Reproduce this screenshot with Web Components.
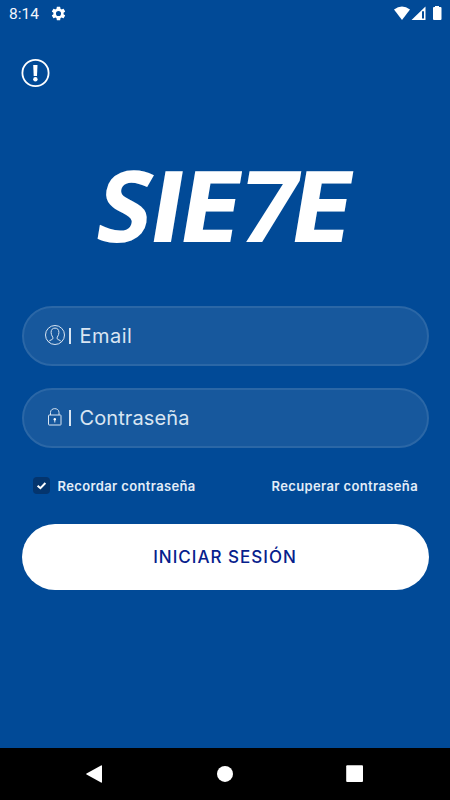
<!DOCTYPE html>
<html lang="es">
<head>
<meta charset="utf-8">
<title>SIE7E</title>
<style>
    html, body{
        margin: 0;
        height: 100%;
        background: #014a97;
    }
</style>
</head>
<body>
<login-screen></login-screen>
<script>
class StatusBar extends HTMLElement{
    constructor(){
        super();
        this.attachShadow({mode:'open'}).innerHTML = `
            <style>
                :host{
                    display: flex;
                    align-items: center;
                    height: 27px;
                    padding: 0 6px 0 9px;
                    font: 15.5px Roboto, sans-serif;
                    color: #f2f6fc;
                }
                .gear{ margin-left: 11px; }
                .right{ margin-left: auto; }
                svg{ display: block; }
            </style>
            <span>8:14</span>
            <svg class="gear" width="17" height="17" viewBox="0 0 24 24" fill="#fff"><path d="M19.14 12.94c.04-.3.06-.61.06-.94 0-.32-.02-.64-.07-.94l2.03-1.58a.49.49 0 0 0 .12-.61l-1.92-3.32a.49.49 0 0 0-.59-.22l-2.39.96c-.5-.38-1.03-.7-1.62-.94l-.36-2.54a.48.48 0 0 0-.48-.41h-3.84c-.24 0-.43.17-.47.41l-.36 2.54c-.59.24-1.13.57-1.62.94l-2.39-.96a.48.48 0 0 0-.59.22L2.74 8.87a.48.48 0 0 0 .12.61l2.03 1.58c-.05.3-.09.63-.09.94s.02.64.07.94l-2.03 1.58a.49.49 0 0 0-.12.61l1.92 3.32c.12.22.37.29.59.22l2.39-.96c.5.38 1.03.7 1.62.94l.36 2.54c.05.24.24.41.48.41h3.84c.24 0 .44-.17.47-.41l.36-2.54c.59-.24 1.13-.56 1.62-.94l2.39.96c.22.08.47 0 .59-.22l1.92-3.32a.48.48 0 0 0-.12-.61zM12 15.6A3.6 3.6 0 1 1 12 8.4a3.6 3.6 0 0 1 0 7.2z"/></svg>
            <svg class="right" width="50" height="16" viewBox="0 0 50 16" fill="#fff">
                <path d="M0 3.6Q8 -2.4 16 3.6L8 14Z"/>
                <path fill-rule="evenodd" d="M31.5 0.6V14H17.5ZM30 5.2H28V12.4H30Z"/>
                <path d="M41 1V0H45V1H46.5Q47.5 1 47.5 2V13Q47.5 14 46.5 14H40Q39 14 39 13V2Q39 1 40 1Z"/>
            </svg>
        `;
    }
}

class BrandLogo extends HTMLElement{
    constructor(){
        super();
        // letter, baseline x, horizontal scale
        const letters = [
            ['S', 92.5, 1],
            ['I', 143.6, 1.15],
            ['E', 173.2, 1.15],
            ['7', 235, 1.02],
            ['E', 284.6, 1.15]
        ];
        this.attachShadow({mode:'open'}).innerHTML = `
            <style>
                :host{ display: block; height: 90px; }
                svg{ display: block; overflow: visible; }
                text{
                    font: 700 99px "Open Sans", sans-serif;
                    fill: #fff;
                }
            </style>
            <svg width="450" height="90" viewBox="0 0 450 90">${letters.map(([c, x, s]) =>
                `<text transform="translate(${x} 80.7) skewX(-9.5) scale(${s} 1)">${c}</text>`).join('')}</svg>
        `;
    }
}

class LoginField extends HTMLElement{
    constructor(){
        super();
        this.attachShadow({mode:'open'}).innerHTML = `
            <style>
                :host{
                    display: flex;
                    align-items: center;
                    box-sizing: border-box;
                    height: 60px;
                    padding-left: 20px;
                    border: 2px solid #2b67a6;
                    border-radius: 30px;
                    background: #17589d;
                    color: #d9e5f2;
                    font: 20px Inter, sans-serif;
                }
                .bar{
                    width: 2px;
                    height: 16px;
                    margin: 0 9px 0 3px;
                    background: #d9e5f2;
                }
                .label{ letter-spacing: var(--label-spacing, .5px); }
            </style>
            <slot name="icon"></slot>
            <span class="bar"></span>
            <span class="label"><slot></slot></span>
        `;
    }
}

class CheckOption extends HTMLElement{
    constructor(){
        super();
        this.attachShadow({mode:'open'}).innerHTML = `
            <style>
                :host{ display: flex; align-items: center; }
                .box{
                    width: 17px;
                    height: 17px;
                    margin-right: 8px;
                    border-radius: 4px;
                    background: #04356e;
                }
                svg{ display: block; }
            </style>
            <span class="box"><svg width="17" height="17" fill="none" stroke="#fff" stroke-width="2"><path d="M4.6 8.7L7.4 11.2L12.4 6"/></svg></span>
            <slot></slot>
        `;
    }
}

class PillButton extends HTMLElement{
    constructor(){
        super();
        this.attachShadow({mode:'open'}).innerHTML = `
            <style>
                :host{
                    display: flex;
                    align-items: center;
                    justify-content: center;
                    height: 66px;
                    border-radius: 33px;
                    background: #fff;
                    color: #06208c;
                    font: 500 17px Inter, sans-serif;
                    letter-spacing: 1px;
                }
            </style>
            <slot></slot>
        `;
    }
}

class NavBar extends HTMLElement{
    constructor(){
        super();
        this.attachShadow({mode:'open'}).innerHTML = `
            <style>
                :host{
                    display: flex;
                    align-items: center;
                    justify-content: space-between;
                    box-sizing: border-box;
                    height: 52px;
                    padding: 0 86px 0 85px;
                    background: #000;
                }
                svg{ display: block; }
            </style>
            <svg width="18" height="18" fill="#fff"><path d="M1.5 8.4L16 .4Q17 0 17 1V17Q17 18 16 17.5L1.5 9.4Q.7 8.9 1.5 8.4Z"/></svg>
            <svg width="18" height="18" fill="#fff"><circle cx="9" cy="8.9" r="8"/></svg>
            <svg width="18" height="18" fill="#fff"><rect x=".2" y=".3" width="16.8" height="16.7" rx="1"/></svg>
        `;
    }
}

class LoginScreen extends HTMLElement{
    constructor(){
        super();
        this.attachShadow({mode:'open'}).innerHTML = `
            <style>
                :host{
                    display: flex;
                    flex-direction: column;
                    width: 450px;
                    height: 800px;
                    background: #014a97;
                    font-family: Inter, sans-serif;
                }
                svg{ display: block; }
                .alert{ margin: 31px 0 0 21px; }
                brand-logo{ margin-top: 74px; }
                form{
                    display: flex;
                    flex-direction: column;
                    gap: 22px;
                    margin: 54.5px 21.5px 0;
                }
                .options{
                    display: flex;
                    align-items: center;
                    justify-content: space-between;
                    height: 20px;
                    margin: 6px 10.5px 6px 11px;
                    color: #e3edf8;
                    font-size: 13px;
                    font-weight: 600;
                    letter-spacing: .37px;
                }
                nav-bar{ margin-top: auto; }
                .password{ --label-spacing: .1px; }
            </style>
            <status-bar></status-bar>
            <svg class="alert" width="29" height="29" fill="none" stroke="#fff">
                <circle cx="14.5" cy="15" r="13.1" stroke-width="1.8"/>
                <path fill="#fff" stroke="none" d="M12.2 7H16.5L16 18H12.7Z"/>
                <circle cx="14.4" cy="21.3" r="2.2" fill="#fff" stroke="none"/>
            </svg>
            <brand-logo></brand-logo>
            <form>
                <login-field>
                    <svg slot="icon" width="22" height="21" fill="none" stroke="#d9e5f2">
                        <circle cx="11" cy="10" r="9.5"/>
                        <path d="M4.6 16.7C5.4 14.8 9 15.1 9 13.1C9 11.9 7.1 10.5 7.1 7.4C7.1 4.6 8.6 3.1 11 3.1S14.9 4.6 14.9 7.4C14.9 10.5 13 11.9 13 13.1C13 15.1 16.6 14.8 17.4 16.7"/>
                    </svg>
                    Email
                </login-field>
                <login-field class="password">
                    <svg slot="icon" width="22" height="21" fill="none" stroke="#d9e5f2">
                        <rect x="4.5" y="8" width="12.5" height="10" rx=".6"/>
                        <path d="M6.5 8V5.4C6.5 .4 15 .4 15 5.4V8M10.8 12.5V15.5"/>
                        <circle cx="10.8" cy="12.3" r="1.2" fill="#fff" stroke="none"/>
                    </svg>
                    Contraseña
                </login-field>
                <div class="options">
                    <check-option>Recordar contraseña</check-option>
                    <span>Recuperar contraseña</span>
                </div>
                <pill-button>INICIAR SESIÓN</pill-button>
            </form>
            <nav-bar></nav-bar>
        `;
    }
}

customElements.define('status-bar', StatusBar);
customElements.define('brand-logo', BrandLogo);
customElements.define('login-field', LoginField);
customElements.define('check-option', CheckOption);
customElements.define('pill-button', PillButton);
customElements.define('nav-bar', NavBar);
customElements.define('login-screen', LoginScreen);
</script>
</body>
</html>
